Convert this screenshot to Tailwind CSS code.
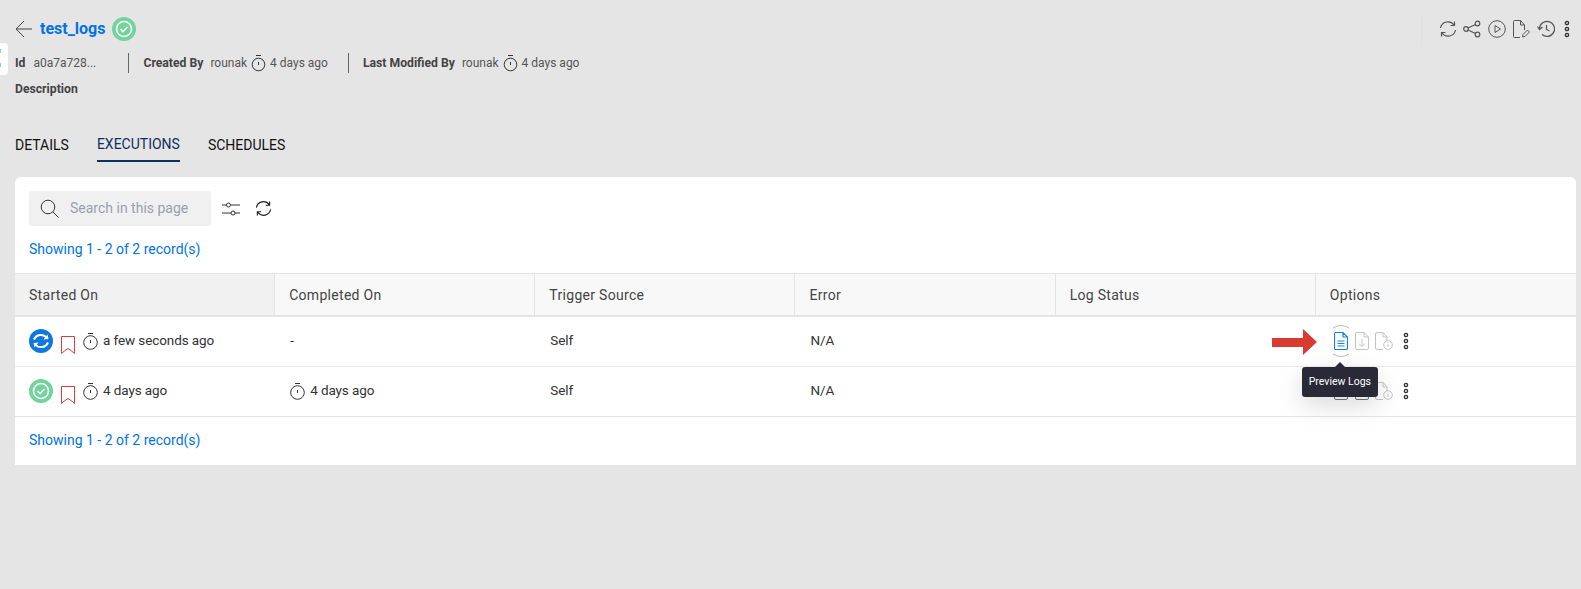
<!DOCTYPE html>
<html lang="en">
<head>
    <meta charset="UTF-8">
    <title>test_logs</title>
    <script src="https://cdn.jsdelivr.net/npm/@tailwindcss/browser@4"></script>
</head>
<body class="bg-[#e5e5e5] font-[Roboto,sans-serif] text-[#333] w-[1581px] h-[589px] overflow-hidden relative">
    <!-- sidebar handle -->
    <div class="absolute left-0 top-[43px] w-[8px] h-[32px] bg-white rounded-r-[4px]">
        <span class="absolute left-0 top-[6px] w-[1px] h-[4px] bg-[#8cc4f5]"></span>
        <span class="absolute left-0 top-[20px] w-[1px] h-[4px] bg-[#8cc4f5]"></span>
    </div>

    <div class="px-[15px] pt-[15px]">
        <!-- title row -->
        <div class="flex items-center h-[28px]">
            <svg class="w-[18px] h-[18px] text-[#444]" viewBox="0 0 18 18" fill="none" stroke="currentColor" stroke-width="1"><path d="M17 9H1M9 1 1 9l8 8"/></svg>
            <span class="ml-[7px] text-[16px] font-bold text-[#0073e6]">test_logs</span>
            <svg class="ml-[7px] w-[24px] h-[24px]" viewBox="0 0 24 24" fill="none"><circle cx="12" cy="12" r="12" fill="#71d49b"/><circle cx="12" cy="12" r="7.5" stroke="#fff" stroke-width="1.6"/><path d="m8.500 12 2.500 2.500 4.500-4.500" stroke="#fff" stroke-width="1.6"/></svg>
            <div class="relative ml-auto -mr-[4px] flex items-center gap-[6.5px] text-[#555]">
                <span class="absolute left-[-18px] top-[-7px] h-[32px] border-l border-[#e0e0e0]"></span>
                <svg class="w-[18px] h-[18px]" viewBox="0 0 18 18" fill="none" stroke="currentColor" stroke-width="1.2"><path d="M1.500 8A7.500 7.500 0 0 1 15 5M16.500 10A7.500 7.500 0 0 1 3 13M15.500 1.500V5.500H11.500M2.500 16.500V12.500H6.500"/></svg>
                <svg class="w-[18px] h-[18px]" viewBox="0 0 18 18" fill="none" stroke="currentColor" stroke-width="1.2"><circle cx="3" cy="9" r="2.300"/><circle cx="14.500" cy="3.500" r="2.300"/><circle cx="14.500" cy="14.500" r="2.300"/><path d="m5 8 7.500-3.500M5 10l7.500 3.500"/></svg>
                <svg class="w-[18px] h-[18px]" viewBox="0 0 18 18" fill="none" stroke="currentColor"><circle cx="9" cy="9" r="8.300"/><path d="M7 5.500v7l5.500-3.500z"/></svg>
                <svg class="w-[18px] h-[18px]" viewBox="0 0 18 18" fill="none" stroke="currentColor"><path d="M8 17.500H2.500a1 1 0 0 1-1-1V1.500a1 1 0 0 1 1-1H8.500L12.500 5v5M8.500.5V5h4M10.500 17l.5-2.500 4.500-4.500 2 2-4.500 4.500z"/></svg>
                <svg class="w-[18px] h-[18px]" viewBox="0 0 18 18" fill="none" stroke="currentColor" stroke-width="1.2"><path d="M2.500 9A7.500 7.500 0 1 1 5 14.500M.5 6.500 2.500 9.500 5.500 7M9.500 5v4.500l3 1.500"/></svg>
                <svg class="ml-[3px] w-[6px] h-[18px]" viewBox="0 0 6 18" fill="none" stroke="#333" stroke-width="1.400"><circle cx="3" cy="3" r="1.600"/><circle cx="3" cy="9" r="1.600"/><circle cx="3" cy="15" r="1.600"/></svg>
            </div>
        </div>

        <!-- meta row -->
        <div class="flex items-center h-[20px] mt-[10px] text-[12px] text-[#555]">
            <b class="font-bold text-[12.2px] text-[#444]">Id</b>
            <span class="ml-[8px] w-[95px]">a0a7a728...</span>
            <span class="h-[20px] border-l border-[#666]"></span>
            <b class="ml-[14px] font-bold text-[12.2px] text-[#444]">Created By</b>
            <span class="ml-[7px]">rounak</span>
            <svg class="mx-[4px] w-[15px] h-[18px]" viewBox="0 0 15 18" fill="none" stroke="#333"><path d="M5 1.500h5M7.500 8v3"/><circle cx="7.500" cy="10.500" r="6.300"/></svg>
            <span>4 days ago</span>
            <span class="ml-[20px] h-[20px] border-l border-[#666]"></span>
            <b class="ml-[14px] font-bold text-[12.2px] text-[#444]">Last Modified By</b>
            <span class="ml-[7px]">rounak</span>
            <svg class="mx-[4px] w-[15px] h-[18px]" viewBox="0 0 15 18" fill="none" stroke="#333"><path d="M5 1.500h5M7.500 8v3"/><circle cx="7.500" cy="10.500" r="6.300"/></svg>
            <span>4 days ago</span>
        </div>
        <div class="mt-[8px] h-[16px] leading-[16px] text-[12.2px] font-bold text-[#444]">Description</div>

        <!-- tabs -->
        <div class="flex gap-[28px] mt-[36px] h-[29px] text-[14px] text-[#111]">
            <span class="pt-[2px]">DETAILS</span>
            <span class="pt-[1px] text-[#0c3161] border-b-2 border-[#0c3161] h-[29px]">EXECUTIONS</span>
            <span class="pt-[2px]">SCHEDULES</span>
        </div>

        <!-- card -->
        <div class="mt-[15px] bg-white rounded-t-[6px] h-[288px] w-[1561px]">
            <div class="px-[14px] pt-[14px] h-[96px]">
                <div class="flex items-center">
                    <div class="flex items-center w-[182px] h-[35px] bg-[#f0f0f1] rounded-[3px] px-[11px] text-[#9aa0ac] text-[14px]">
                        <svg class="w-[19px] h-[19px]" viewBox="0 0 19 19" fill="none" stroke="#333"><circle cx="8" cy="8" r="6.800"/><path d="m13 13 5.500 5.500"/></svg>
                        <span class="ml-[11px]">Search in this page</span>
                    </div>
                    <svg class="ml-[11px] w-[18px] h-[14px]" viewBox="0 0 18 14" fill="none" stroke="#333"><path d="M0 3h4.500M9 3h9M0 11h9M13 11h5"/><circle cx="6.500" cy="3" r="2"/><circle cx="11" cy="11" r="2"/></svg>
                    <svg class="ml-[15px] w-[17px] h-[17px]" viewBox="0 0 18 18" fill="none" stroke="#222" stroke-width="1.200"><path d="M1.500 8A7.500 7.500 0 0 1 15 5M16.500 10A7.500 7.500 0 0 1 3 13M15.500 1.500V5.500H11.500M2.500 16.500V12.500H6.500"/></svg>
                </div>
                <div class="mt-[13px] leading-[20px] text-[14px] text-[#0073e6]">Showing 1 - 2 of 2 record(s)</div>
            </div>

            <!-- table -->
            <div class="grid grid-cols-6 h-[44px] border-y-2 border-t border-[#e4e4e4] text-[14px] text-[#444] tracking-[0.3px]">
                <div class="flex items-center pl-[14px] pt-[1px] bg-[#f1f1f1] border-r border-[#e4e4e4]">Started On</div>
                <div class="flex items-center pl-[14px] pt-[1px] bg-[#f8f8f8] border-r border-[#e4e4e4]">Completed On</div>
                <div class="flex items-center pl-[14px] pt-[1px] bg-[#f8f8f8] border-r border-[#e4e4e4]">Trigger Source</div>
                <div class="flex items-center pl-[14px] pt-[1px] bg-[#f8f8f8] border-r border-[#e4e4e4]">Error</div>
                <div class="flex items-center pl-[14px] pt-[1px] bg-[#f8f8f8] border-r border-[#e4e4e4]">Log Status</div>
                <div class="flex items-center pl-[14px] pt-[1px] bg-[#f8f8f8]">Options</div>
            </div>

            <!-- row 1 -->
            <div class="grid grid-cols-6 h-[50px] pb-[2px] border-b border-[#ececec] text-[13.500px] tracking-[-0.1px] text-[#333] items-center">
                <div class="flex items-center pl-[14px]">
                    <svg class="w-[24px] h-[24px]" viewBox="0 0 24 24" fill="none"><circle cx="12" cy="12" r="12" fill="#0f78de"/><path d="M5 10.500A7.500 7.500 0 0 1 18 9M19 13.500A7.500 7.500 0 0 1 6 15" stroke="#fff" stroke-width="2"/><path d="m14.500 10.500 5-.5-1-4.500zM9.500 13.500l-5 .5 1 4.500z" fill="#fff"/></svg>
                    <svg class="ml-[8px] mt-[8px] w-[14px] h-[18px]" viewBox="0 0 14 18" fill="none" stroke="#e03c3c"><path d="M.5.500h13v17L10 14.500 7 12.500 4 14.500.5 17.500z"/></svg>
                    <svg class="ml-[8px] w-[15px] h-[18px]" viewBox="0 0 15 18" fill="none" stroke="#333"><path d="M5 1.500h5M7.500 8v3"/><circle cx="7.500" cy="10.500" r="6.800"/></svg>
                    <span class="ml-[5px]">a few seconds ago</span>
                </div>
                <div class="pl-[15px]">-</div>
                <div class="pl-[15px]">Self</div>
                <div class="pl-[15px]">N/A</div>
                <div></div>
                <div class="relative">
                    <!-- annotation arrow -->
                    <svg class="absolute left-[-44px] top-[-12px] w-[45px] h-[26px]" viewBox="0 0 45 26"><path d="M0 9h31V0l14 13-14 13V18H0z" fill="#d83c30"/></svg>
                    <!-- hover ring, only its top and bottom arcs show -->
                    <svg class="absolute left-[16px] top-[-17px] w-[18px] h-[34px]" viewBox="0 0 18 34" fill="none" stroke="#bbb"><path d="M1 4Q9-1 17 4M1 30Q9 35 17 30"/></svg>
                    <div class="flex items-center absolute left-[18px] top-[-9px] gap-[6px]">
                        <svg class="w-[14px] h-[18px]" viewBox="0 0 14 18" fill="none" stroke="#1a80e5" stroke-width="1.200"><path d="M.5 2a1.500 1.500 0 0 1 1.500-1.500H9L13.500 5v11a1.500 1.500 0 0 1-1.500 1.500H2A1.500 1.500 0 0 1 .5 16zM9 .5V5h4.500M3.500 9h7M3.500 11.500h7M3.500 14h7"/></svg>
                        <svg class="ml-[1px] w-[14px] h-[18px]" viewBox="0 0 14 18" fill="none" stroke="#c4c4c4"><path d="M.5 2a1.500 1.500 0 0 1 1.500-1.500H9L13.500 5v11a1.500 1.500 0 0 1-1.500 1.500H2A1.500 1.500 0 0 1 .5 16zM9 .5V5h4.500M7 7v7M4 11.500 7 14.500l3-3"/></svg>
                        <svg class="w-[18px] h-[18px]" viewBox="0 0 18 18" fill="none" stroke="#c4c4c4"><path d="M8 17.500H2A1.500 1.500 0 0 1 .5 16V2A1.500 1.500 0 0 1 2 .5H8L12 5v4M8 .5V5h4"/><circle cx="13" cy="13" r="4.300"/><path d="M13 12v3M13 10.500v.7"/></svg>
                        <svg class="ml-[4px] w-[6px] h-[18px]" viewBox="0 0 6 18" fill="none" stroke="#333" stroke-width="1.400"><circle cx="3" cy="3" r="1.600"/><circle cx="3" cy="9" r="1.600"/><circle cx="3" cy="15" r="1.600"/></svg>
                    </div>
                </div>
            </div>

            <!-- row 2 -->
            <div class="grid grid-cols-6 h-[50px] pb-[2px] border-b border-[#e4e4e4] text-[13.500px] tracking-[-0.1px] text-[#333] items-center">
                <div class="flex items-center pl-[14px]">
                    <svg class="w-[24px] h-[24px]" viewBox="0 0 24 24" fill="none"><circle cx="12" cy="12" r="12" fill="#71d49b"/><circle cx="12" cy="12" r="7.500" stroke="#fff" stroke-width="1.600"/><path d="m8.500 12 2.500 2.500 4.500-4.500" stroke="#fff" stroke-width="1.600"/></svg>
                    <svg class="ml-[8px] mt-[8px] w-[14px] h-[18px]" viewBox="0 0 14 18" fill="none" stroke="#e03c3c"><path d="M.5.500h13v17L10 14.500 7 12.500 4 14.500.5 17.500z"/></svg>
                    <svg class="ml-[8px] w-[15px] h-[18px]" viewBox="0 0 15 18" fill="none" stroke="#333"><path d="M5 1.500h5M7.500 8v3"/><circle cx="7.500" cy="10.500" r="6.800"/></svg>
                    <span class="ml-[5px]">4 days ago</span>
                </div>
                <div class="flex items-center pl-[15px]">
                    <svg class="w-[15px] h-[18px]" viewBox="0 0 15 18" fill="none" stroke="#333"><path d="M5 1.500h5M7.500 8v3"/><circle cx="7.500" cy="10.500" r="6.800"/></svg>
                    <span class="ml-[5px]">4 days ago</span>
                </div>
                <div class="pl-[15px]">Self</div>
                <div class="pl-[15px]">N/A</div>
                <div></div>
                <div class="relative">
                    <div class="flex items-center absolute left-[18px] top-[-9px] gap-[6px]">
                        <svg class="w-[14px] h-[18px]" viewBox="0 0 14 18" fill="none" stroke="#777"><path d="M.5 2a1.500 1.500 0 0 1 1.500-1.500H9L13.500 5v11a1.500 1.500 0 0 1-1.500 1.500H2A1.500 1.500 0 0 1 .5 16z"/></svg>
                        <svg class="ml-[1px] w-[14px] h-[18px]" viewBox="0 0 14 18" fill="none" stroke="#777"><path d="M.5 2a1.500 1.500 0 0 1 1.500-1.500H9L13.500 5v11a1.500 1.500 0 0 1-1.500 1.500H2A1.500 1.500 0 0 1 .5 16z"/></svg>
                        <svg class="w-[18px] h-[18px]" viewBox="0 0 18 18" fill="none" stroke="#c4c4c4"><path d="M8 17.500H2A1.500 1.500 0 0 1 .5 16V2A1.500 1.500 0 0 1 2 .5H8L12 5v4M8 .5V5h4"/><circle cx="13" cy="13" r="4.300"/><path d="M13 12v3M13 10.500v.7"/></svg>
                        <svg class="ml-[4px] w-[6px] h-[18px]" viewBox="0 0 6 18" fill="none" stroke="#333" stroke-width="1.400"><circle cx="3" cy="3" r="1.600"/><circle cx="3" cy="9" r="1.600"/><circle cx="3" cy="15" r="1.600"/></svg>
                    </div>
                    <!-- tooltip -->
                    <div class="absolute left-[-14px] top-[-24px] w-[76px] h-[30px] flex items-center justify-center rounded-[3px] bg-[#2a2937] text-white text-[10.500px] tracking-normal shadow-[0_8px_24px_rgba(0,0,0,0.15)]">
                        Preview Logs
                        <span class="absolute left-[32px] top-[-5px] w-0 h-0 border-x-[6px] border-x-transparent border-b-[6px] border-b-[#2a2937]"></span>
                    </div>
                </div>
            </div>

            <div class="pl-[14px] pt-[13px] text-[14px] text-[#0073e6]">Showing 1 - 2 of 2 record(s)</div>
        </div>
    </div>
</body>
</html>
